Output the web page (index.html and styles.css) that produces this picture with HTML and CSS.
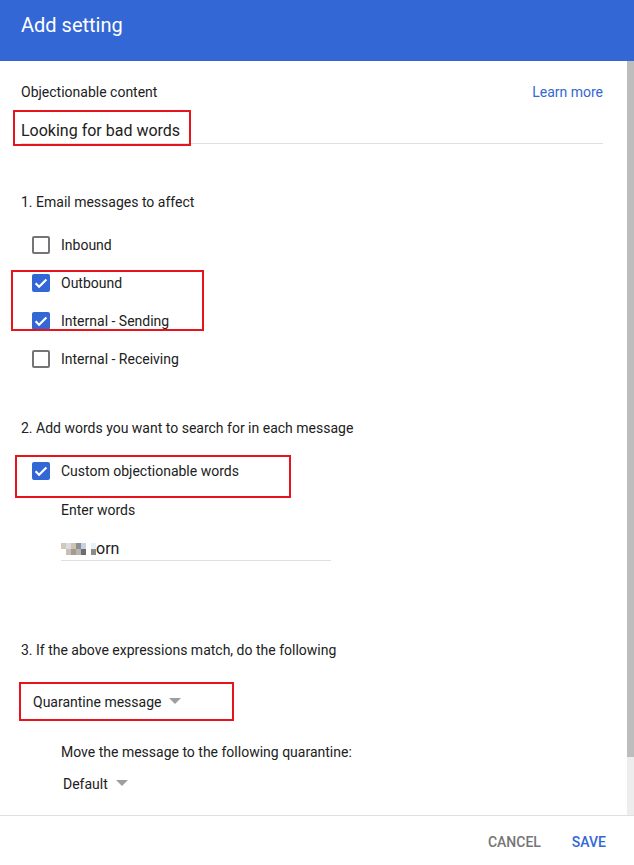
FILE: index.html
```html
<!DOCTYPE html>
<html lang="en">
<head>
    <meta charset="UTF-8">
    <meta name="viewport" content="width=device-width, initial-scale=1.0">
    <title>Add setting</title>
    <link rel="stylesheet" href="styles.css">
</head>
<body>
    <div class="dialog">
        <div class="dialog-header">Add setting</div>
        <div class="dialog-main">
            <div class="content">
                <div class="row-label">
                    <span>Objectionable content</span>
                    <a class="link" href="#">Learn more</a>
                </div>
                <div class="title-field">Looking for bad words</div>

                <div class="section-title s1">1. Email messages to affect</div>
                <div class="check-list">
                    <div class="check-row"><span class="box"></span>Inbound</div>
                    <div class="check-row"><span class="box checked"><svg viewBox="0 0 18 18"><path d="M3.6 9.3l3.5 3.5 7.3-7.3"/></svg></span>Outbound</div>
                    <div class="check-row"><span class="box checked"><svg viewBox="0 0 18 18"><path d="M3.6 9.3l3.5 3.5 7.3-7.3"/></svg></span>Internal - Sending</div>
                    <div class="check-row"><span class="box"></span>Internal - Receiving</div>
                </div>

                <div class="section-title s2">2. Add words you want to search for in each message</div>
                <div class="check-list s2-list">
                    <div class="check-row"><span class="box checked"><svg viewBox="0 0 18 18"><path d="M3.6 9.3l3.5 3.5 7.3-7.3"/></svg></span>Custom objectionable words</div>
                </div>
                <div class="sub">
                    <div class="sub-label">Enter words</div>
                    <div class="words-field">
                        <span class="mosaic">
                            <i style="background:#d3c7bb"></i><i style="background:#d9dde3"></i><i style="background:#cfc3b0"></i><i style="background:#8a8f96"></i><i style="background:#c5d2e0"></i><i style="background:#fff"></i><i style="background:#e6f1f8"></i>
                            <i style="background:#fff"></i><i style="background:#c8c0b6"></i><i style="background:#a49c92"></i><i style="background:#bcb4aa"></i><i style="background:#6a6e74"></i><i style="background:#fff"></i><i style="background:#8c8c8c"></i>
                        </span><span class="words-text">orn</span>
                    </div>
                </div>

                <div class="section-title s3">3. If the above expressions match, do the following</div>
                <div class="dropdown main-drop">Quarantine message<span class="caret"></span></div>
                <div class="sub">
                    <div class="sub-label move">Move the message to the following quarantine:</div>
                    <div class="dropdown small-drop">Default<span class="caret"></span></div>
                </div>

                <div class="mark m1"></div>
                <div class="mark m2"></div>
                <div class="mark m3"></div>
                <div class="mark m4"></div>
            </div>
            <div class="scrollbar"><div class="thumb"></div></div>
        </div>
        <div class="dialog-footer">
            <button class="btn cancel">Cancel</button>
            <button class="btn save">Save</button>
        </div>
    </div>
</body>
</html>
```

FILE: styles.css
```css
body {
    margin: 0;
    background-color: #ffffff;
    font-family: Roboto, "Liberation Sans", Arial, sans-serif;
    color: #212121;
    font-size: 14px;
}
.dialog {
    width: 634px;
    height: 865px;
    display: flex;
    flex-direction: column;
    overflow: hidden;
}
.dialog-header {
    height: 61px;
    flex: none;
    background-color: #3367d6;
    color: #ffffff;
    font-size: 20px;
    line-height: 24px;
    padding: 13px 0 0 21px;
    box-sizing: border-box;
}
.dialog-main {
    flex: 1;
    display: flex;
    min-height: 0;
}
.content {
    flex: 1;
    position: relative;
    padding: 21px 24px 0 21px;
}
.scrollbar {
    width: 7px;
    flex: none;
    background-color: #ededed;
}
.thumb {
    height: 696px;
    background-color: #bdbdbd;
}
.row-label {
    display: flex;
    justify-content: space-between;
    line-height: 20px;
}
.link {
    color: #3367d6;
    text-decoration: none;
}
.title-field {
    margin-top: 8px;
    padding: 9px 0 0;
    font-size: 16px;
    line-height: 24px;
    border-bottom: 1px solid #e0e0e0;
}
.section-title {
    line-height: 20px;
}
.s1 {
    margin-top: 48px;
}
.s2 {
    margin-top: 40px;
}
.s3 {
    margin-top: 79px;
}
.check-list {
    margin-top: 14px;
    padding-left: 11px;
}
.s2-list {
    margin-top: 14px;
}
.check-row {
    display: flex;
    align-items: center;
    height: 38px;
}
.box {
    width: 18px;
    height: 18px;
    box-sizing: border-box;
    border: 2px solid #757575;
    border-radius: 2px;
    margin-right: 11px;
    flex: none;
}
.box.checked {
    border: none;
    background-color: #3367d6;
}
.box svg {
    display: block;
    width: 18px;
    height: 18px;
}
.box path {
    fill: none;
    stroke: #ffffff;
    stroke-width: 2.2;
}
.sub {
    padding-left: 40px;
}
.sub-label {
    margin-top: 10px;
    line-height: 20px;
}
.words-field {
    margin-top: 16px;
    width: 270px;
    height: 25px;
    box-sizing: border-box;
    border-bottom: 1px solid #e0e0e0;
    display: flex;
    align-items: center;
    font-size: 16px;
}
.mosaic {
    display: grid;
    grid-template-columns: repeat(7, 5px);
    grid-auto-rows: 6px;
    margin-top: 2px;
}
.mosaic i {
    display: block;
}
.dropdown {
    display: flex;
    align-items: center;
    line-height: 20px;
}
.caret {
    width: 0;
    height: 0;
    border-left: 6px solid transparent;
    border-right: 6px solid transparent;
    border-top: 6px solid #9e9e9e;
    margin-left: 8px;
    margin-top: -3px;
}
.main-drop {
    margin-top: 32px;
    padding-left: 12px;
}
.move {
    margin-top: 30px;
}
.small-drop {
    margin-top: 12px;
    padding-left: 2px;
}
.mark {
    position: absolute;
    border: 2px solid #e8141c;
    box-sizing: border-box;
}
.m1 {
    left: 13px;
    top: 49px;
    width: 178px;
    height: 36px;
}
.m2 {
    left: 11px;
    top: 209px;
    width: 193px;
    height: 61px;
}
.m3 {
    left: 15px;
    top: 394px;
    width: 276px;
    height: 43px;
}
.m4 {
    left: 19px;
    top: 621px;
    width: 215px;
    height: 39px;
}
.dialog-footer {
    height: 50px;
    flex: none;
    border-top: 1px solid #e0e0e0;
    display: flex;
    justify-content: flex-end;
    align-items: center;
    padding-right: 20px;
    box-sizing: border-box;
}
.btn {
    background: none;
    border: none;
    font-family: Roboto, "Liberation Sans", Arial, sans-serif;
    font-size: 14px;
    font-weight: 500;
    text-transform: uppercase;
    padding: 8px 8px;
    margin-top: 2px;
    cursor: pointer;
}
.cancel {
    color: #757575;
    margin-right: 15px;
}
.save {
    color: #3367d6;
}
```
